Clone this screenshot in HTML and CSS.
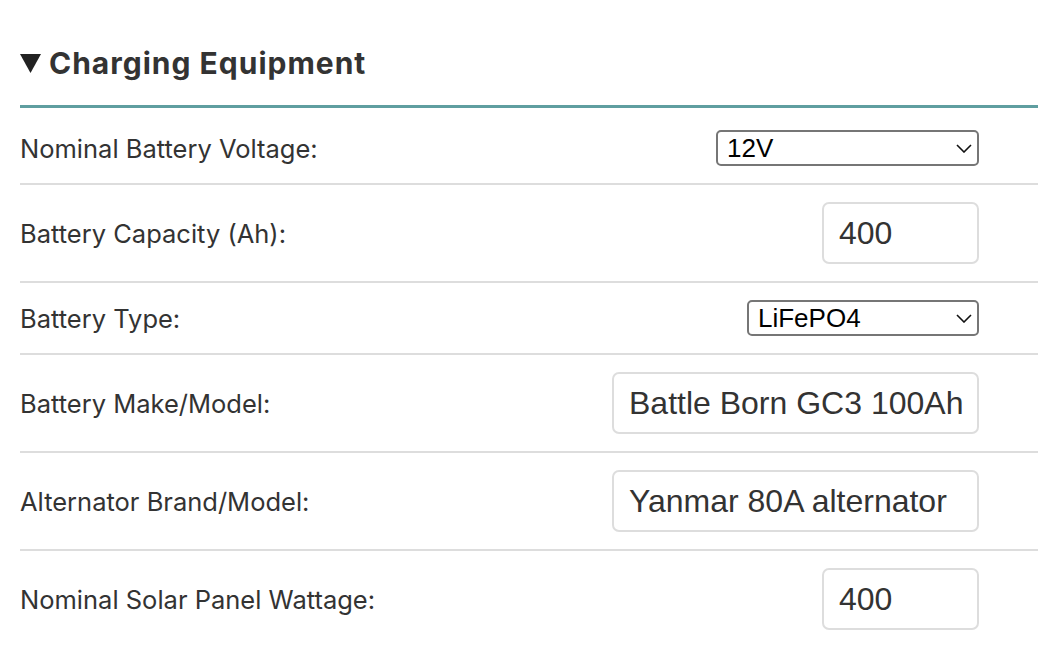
FILE: index.html
```html
<!DOCTYPE html>
<html lang="en">
<head>
    <meta charset="UTF-8">
    <meta name="viewport" content="width=device-width, initial-scale=1.0">
    <title>Charging Equipment</title>
    <link rel="stylesheet" href="styles.css">
</head>
<body>
    <details class="panel" open>
        <summary class="panel-title">
            <svg class="caret" width="21" height="19" viewBox="0 0 21 19"><polygon points="0,0 21,0 10.5,19" fill="#222"/></svg>
            Charging Equipment
        </summary>
        <div class="panel-body">
            <div class="field">
                <label for="voltage">Nominal Battery Voltage:</label>
                <div class="select-wrap wide">
                    <select id="voltage">
                        <option>12V</option>
                        <option>24V</option>
                        <option>48V</option>
                    </select>
                    <svg class="chevron" width="16" height="9" viewBox="0 0 16 9"><polyline points="1,1 8,8 15,1" fill="none" stroke="#111" stroke-width="1.6"/></svg>
                </div>
            </div>
            <div class="field">
                <label for="capacity">Battery Capacity (Ah):</label>
                <input id="capacity" class="short" type="text" value="400">
            </div>
            <div class="field">
                <label for="type">Battery Type:</label>
                <div class="select-wrap">
                    <select id="type">
                        <option>LiFePO4</option>
                        <option>AGM</option>
                        <option>Flooded</option>
                    </select>
                    <svg class="chevron" width="16" height="9" viewBox="0 0 16 9"><polyline points="1,1 8,8 15,1" fill="none" stroke="#111" stroke-width="1.6"/></svg>
                </div>
            </div>
            <div class="field">
                <label for="make">Battery Make/Model:</label>
                <input id="make" class="long" type="text" value="Battle Born GC3 100Ah">
            </div>
            <div class="field">
                <label for="alternator">Alternator Brand/Model:</label>
                <input id="alternator" class="long" type="text" value="Yanmar 80A alternator">
            </div>
            <div class="field">
                <label for="solar">Nominal Solar Panel Wattage:</label>
                <input id="solar" class="short" type="text" value="400">
            </div>
        </div>
    </details>
</body>
</html>
```

FILE: styles.css
```css
body {
    font-family: Inter, "Noto Sans", sans-serif;
    color: #333;
    background-color: #fff;
    margin: 0;
    padding: 43px 20px 0;
}
.panel-title {
    display: flex;
    align-items: center;
    gap: 8px;
    list-style: none;
    font-size: 30px;
    font-weight: 700;
    letter-spacing: 1px;
    line-height: 40px;
    color: #333;
    padding-bottom: 22px;
    border-bottom: 3px solid #5f9ea0;
    cursor: pointer;
}
.panel-title::-webkit-details-marker {
    display: none;
}
.caret {
    margin-top: 1px;
}
.panel-body {
    padding-top: 5px;
}
.field {
    display: flex;
    justify-content: space-between;
    align-items: center;
    padding: 17px 59px 17px 0;
    border-bottom: 2px solid #ddd;
}
.field:last-child {
    border-bottom: none;
}
.field label {
    font-size: 25.5px;
    color: #333;
}
.field input {
    box-sizing: border-box;
    height: 62px;
    padding: 0 12px 0 15px;
    border: 2px solid #ddd;
    border-radius: 7px;
    font-family: "Liberation Sans", Arial, sans-serif;
    font-size: 32px;
    color: #333;
    background: #fff;
    outline: none;
}
.field input.short {
    width: 157px;
}
.field input.long {
    width: 367px;
}
.select-wrap {
    position: relative;
    width: 232px;
}
.select-wrap.wide {
    width: 263px;
}
.select-wrap select {
    -webkit-appearance: none;
    appearance: none;
    box-sizing: border-box;
    width: 100%;
    height: 36px;
    padding: 0 30px 0 9px;
    border: 2px solid #767676;
    border-radius: 5px;
    background: #fff;
    font-family: "Liberation Sans", Arial, sans-serif;
    font-size: 26px;
    color: #000;
}
.chevron {
    position: absolute;
    right: 7px;
    top: 14px;
    pointer-events: none;
}
```
